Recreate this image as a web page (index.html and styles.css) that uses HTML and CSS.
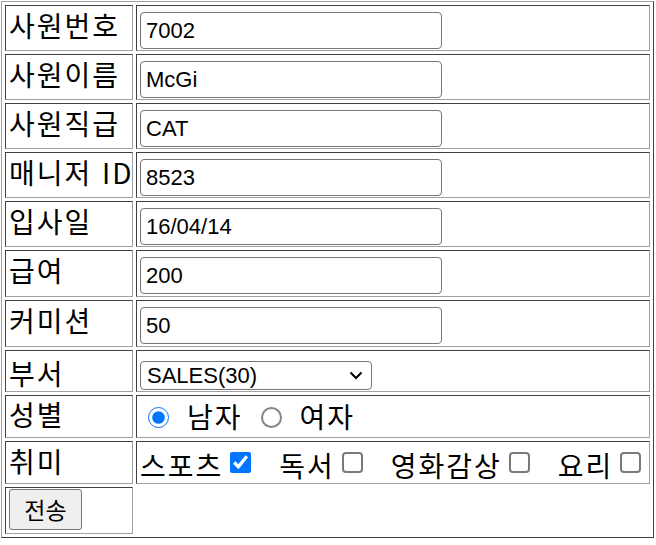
FILE: index.html
```html
<!DOCTYPE html>
<html lang="ko">
<head>
<meta charset="utf-8">
<title>사원 정보</title>
<link rel="stylesheet" href="styles.css">
</head>
<body>
<form class="emp-form">
<table class="form-table">
  <tr class="row-input">
    <td class="label">사원번호</td>
    <td class="field"><input type="text" class="text-input" value="7002"></td>
  </tr>
  <tr class="row-input">
    <td class="label">사원이름</td>
    <td class="field"><input type="text" class="text-input" value="McGi"></td>
  </tr>
  <tr class="row-input">
    <td class="label">사원직급</td>
    <td class="field"><input type="text" class="text-input" value="CAT"></td>
  </tr>
  <tr class="row-input">
    <td class="label">매니저 ID</td>
    <td class="field"><input type="text" class="text-input" value="8523"></td>
  </tr>
  <tr class="row-input">
    <td class="label">입사일</td>
    <td class="field"><input type="text" class="text-input" value="16/04/14"></td>
  </tr>
  <tr class="row-input row-tall">
    <td class="label">급여</td>
    <td class="field"><input type="text" class="text-input" value="200"></td>
  </tr>
  <tr class="row-input row-tall">
    <td class="label">커미션</td>
    <td class="field"><input type="text" class="text-input" value="50"></td>
  </tr>
  <tr class="row-select">
    <td class="label">부서</td>
    <td class="field">
      <span class="select-wrap">
        <select class="dept-select"><option>SALES(30)</option><option>ACCOUNTING(10)</option><option>RESEARCH(20)</option><option>OPERATIONS(40)</option></select>
        <svg class="chevron" width="14" height="9" viewBox="0 0 14 9"><polyline points="1.5,1.5 7,7 12.5,1.5" fill="none" stroke="#000" stroke-width="2"/></svg>
      </span>
    </td>
  </tr>
  <tr class="row-radio">
    <td class="label">성별</td>
    <td class="field"><input type="radio" name="gender" class="radio" checked><span class="opt">남자</span><input type="radio" name="gender" class="radio radio-off"><span class="opt">여자</span></td>
  </tr>
  <tr class="row-check">
    <td class="label">취미</td>
    <td class="field"><span class="opt opt-first">스포츠</span><input type="checkbox" class="check" checked><span class="opt">독서</span><input type="checkbox" class="check check-off"><span class="opt">영화감상</span><input type="checkbox" class="check check-off"><span class="opt">요리</span><input type="checkbox" class="check check-off"></td>
  </tr>
  <tr class="row-button">
    <td class="label"><button type="button" class="submit-btn">전송</button></td>
  </tr>
</table>
</form>
</body>
</html>
```
FILE: styles.css
```css
html, body {
  background: #fff;
}
body {
  margin: 1px;
  font-family: "Noto Sans CJK KR", "Noto Sans", sans-serif;
  color: #000;
}
.emp-form {
  margin: 0;
}
.form-table {
  width: 653px;
  table-layout: fixed;
  border-spacing: 3px;
  border-style: solid;
  border-width: 1px;
  border-color: #a0a0a0 #404040 #404040 #a0a0a0;
}
.form-table td {
  box-sizing: border-box;
  border-style: solid;
  border-width: 1px;
  border-color: #404040 #a0a0a0 #a0a0a0 #404040;
  padding: 1px 3px;
  vertical-align: top;
  font-size: 28px;
  letter-spacing: 2px;
  line-height: 32px;
  white-space: nowrap;
}
.form-table td.label {
  width: 128px;
  padding: 3px 0 1px 3px;
}
.row-input {
  height: 46px;
}
.row-input.row-tall {
  height: 47px;
}
.row-select {
  height: 42px;
}
.row-radio,
.row-check {
  height: 43px;
}
.row-button {
  height: 47px;
}

/* text inputs */
.form-table .row-input td.field {
  padding-top: 6px;
}
.text-input {
  box-sizing: border-box;
  width: 302px;
  height: 37px;
  margin: 0;
  padding: 0 5px;
  border: 1px solid #767676;
  border-radius: 4px;
  font-family: "Liberation Sans", Arial, sans-serif;
  font-size: 22px;
  letter-spacing: 0;
  color: #000;
  background: #fff;
  vertical-align: top;
}

/* select */
.form-table .row-select td.label {
  padding-top: 6px;
}
.form-table .row-select td.field {
  padding-top: 10px;
  padding-bottom: 0;
  line-height: 29px;
}
.select-wrap {
  position: relative;
  display: inline-block;
  vertical-align: top;
  letter-spacing: 0;
}
.dept-select {
  appearance: none;
  -webkit-appearance: none;
  box-sizing: border-box;
  width: 232px;
  height: 29px;
  margin: 0;
  padding: 0 0 0 6px;
  border: 1px solid #767676;
  border-radius: 4px;
  background: #fff;
  font-family: "Liberation Sans", Arial, sans-serif;
  font-size: 22px;
  color: #000;
  display: block;
}
.chevron {
  position: absolute;
  right: 9px;
  top: 10px;
  pointer-events: none;
}

/* radios */
.form-table .row-radio td.label {
  padding-top: 2px;
}
.form-table .row-radio td.field {
  padding-top: 4px;
}
.radio {
  box-sizing: border-box;
  width: 21px;
  height: 21px;
  margin: 7px 0 0 8px;
  vertical-align: top;
}
.radio-off {
  appearance: none;
  -webkit-appearance: none;
  border: 2px solid #858585;
  border-radius: 50%;
  background: #fff;
}
.row-radio .opt {
  margin-left: 18px;
  margin-right: 10px;
}

/* checkboxes */
.form-table .row-check td.field {
  padding-top: 7px;
  padding-bottom: 0;
}
.row-check .opt {
  margin-left: 28px;
}
.row-check .opt.opt-first {
  margin-left: 0;
}
.check {
  box-sizing: border-box;
  width: 21px;
  height: 21px;
  margin: 3px 0 0 7px;
  vertical-align: top;
}
.check-off {
  appearance: none;
  -webkit-appearance: none;
  border: 2px solid #7a7a7a;
  border-radius: 4px;
  background: #fff;
}

/* button */
.form-table .row-button td.label {
  padding-top: 1px;
}
.submit-btn {
  box-sizing: border-box;
  width: 73px;
  height: 41px;
  margin: 0;
  padding: 0;
  border: 1px solid #767676;
  border-radius: 3px;
  background: #efefef;
  font-family: "Noto Sans CJK KR", sans-serif;
  font-size: 23px;
  letter-spacing: 0;
  line-height: 1;
  color: #000;
  vertical-align: top;
}
```
